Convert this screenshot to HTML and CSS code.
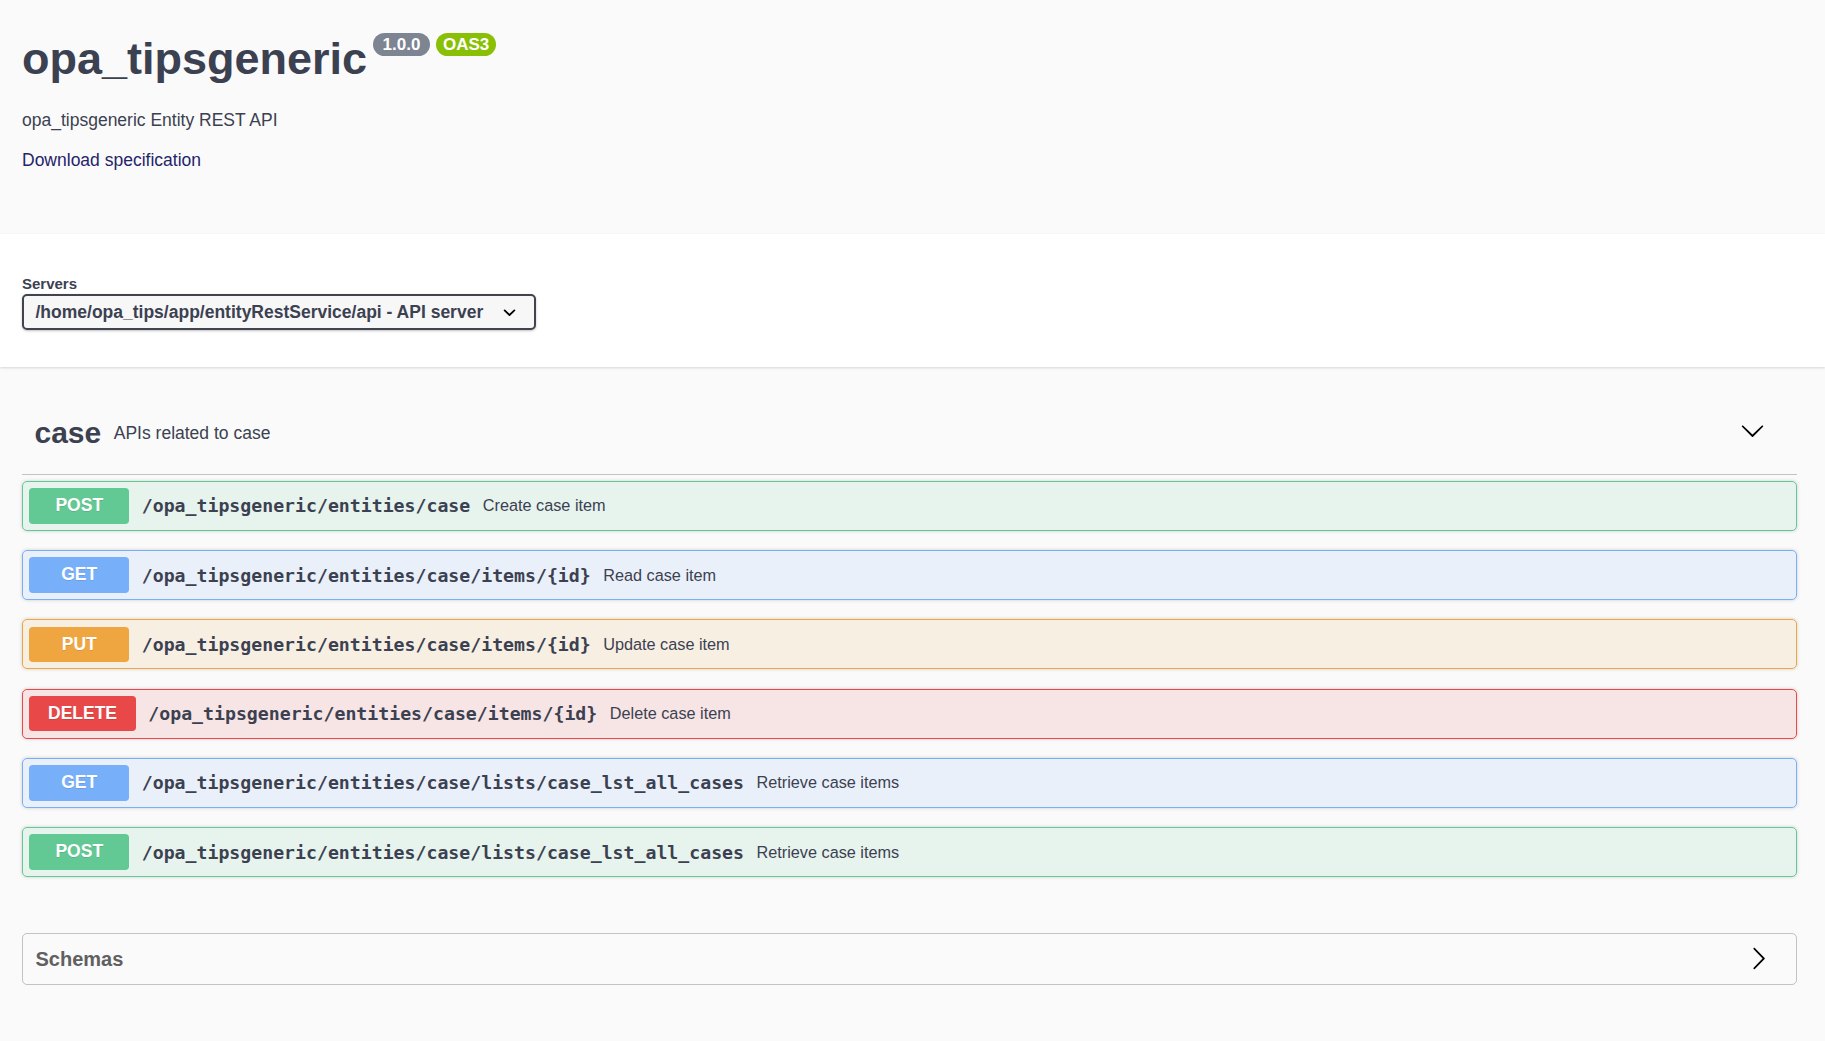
FILE: index.html
```html
<!DOCTYPE html>
<html lang="en">
<head>
  <meta charset="UTF-8" />
  <meta name="viewport" content="width=device-width, initial-scale=1.0"/>
  <title>opa_tipsgeneric</title>
  <link rel="stylesheet" href="styles.css">
</head>
<body>
  <div class="wrapper">
    <div class="info">
      <h2 class="title">opa_tipsgeneric<span class="stamp version">1.0.0</span><span class="stamp oas">OAS3</span></h2>
      <p class="description">opa_tipsgeneric Entity REST API</p>
      <p class="spec-link"><a href="#">Download specification</a></p>
    </div>
  </div>

  <div class="scheme-container">
    <div class="wrapper">
      <label class="servers-title">Servers</label>
      <div class="servers-select">
        <span>/home/opa_tips/app/entityRestService/api - API server</span>
        <svg viewBox="0 0 20 20" width="25" height="25"><path d="M13.418 7.859a.695.695 0 01.978 0 .68.68 0 010 .969l-3.908 3.83a.697.697 0 01-.979 0l-3.908-3.830a.68.68 0 010-.969.695.695 0 01.978 0L10 11l3.418-3.141z"/></svg>
      </div>
    </div>
  </div>

  <div class="wrapper">
    <section class="tag-section">
      <h3 class="tag">
        <span class="tag-name">case</span>
        <small>APIs related to case</small>
        <button class="expand">
          <svg viewBox="0 0 20 20" width="25" height="25"><path d="M17.418 6.109c.272-.268.709-.268.979 0s.271.701 0 .969l-7.908 7.83c-.27.268-.707.268-.979 0l-7.908-7.83c-.27-.268-.27-.701 0-.969.271-.268.709-.268.979 0L10 13.25l7.418-7.141z"/></svg>
        </button>
      </h3>

      <div class="opblock post">
        <span class="method">POST</span>
        <span class="path">/opa_tipsgeneric/entities/case</span>
        <span class="summary">Create case item</span>
      </div>
      <div class="opblock get">
        <span class="method">GET</span>
        <span class="path">/opa_tipsgeneric/entities/case/items/{id}</span>
        <span class="summary">Read case item</span>
      </div>
      <div class="opblock put">
        <span class="method">PUT</span>
        <span class="path">/opa_tipsgeneric/entities/case/items/{id}</span>
        <span class="summary">Update case item</span>
      </div>
      <div class="opblock delete">
        <span class="method">DELETE</span>
        <span class="path">/opa_tipsgeneric/entities/case/items/{id}</span>
        <span class="summary">Delete case item</span>
      </div>
      <div class="opblock get">
        <span class="method">GET</span>
        <span class="path">/opa_tipsgeneric/entities/case/lists/case_lst_all_cases</span>
        <span class="summary">Retrieve case items</span>
      </div>
      <div class="opblock post">
        <span class="method">POST</span>
        <span class="path">/opa_tipsgeneric/entities/case/lists/case_lst_all_cases</span>
        <span class="summary">Retrieve case items</span>
      </div>
    </section>

    <section class="models">
      <h4>Schemas</h4>
      <svg viewBox="0 0 20 20" width="25" height="25"><path d="M13.25 10L6.109 2.58c-.268-.27-.268-.707 0-.979.268-.27.701-.27.969 0l7.83 7.908c.268.271.268.709 0 .979l-7.830 7.908c-.268.271-.701.27-.969 0-.268-.269-.268-.707 0-.979L13.25 10z"/></svg>
    </section>
  </div>
</body>
</html>
```

FILE: styles.css
```css
* {
  box-sizing: border-box;
}

body {
  margin: 0;
  font-family: "Liberation Sans", Arial, sans-serif;
  background-color: #fafafa;
  color: #3b4151;
}

.wrapper {
  max-width: 1775px;
  margin: 0 28px 0 22px;
}

/* header info */
.info {
  padding: 33px 0 64px;
}

.title {
  display: flex;
  align-items: flex-start;
  margin: 0;
  font-size: 45px;
  line-height: 52px;
  font-weight: bold;
}

.stamp {
  margin-top: -0.5px;
  height: 23px;
  line-height: 23px;
  border-radius: 70px;
  color: white;
  font-size: 17px;
  font-weight: bold;
}

.version {
  background-color: #7d8492;
  padding: 0 10px;
  margin-left: 5.5px;
}

.oas {
  background-color: #89bf04;
  padding: 0 7px;
  margin-left: 5.5px;
}

.description {
  margin: 25px 0 0;
  font-size: 17.5px;
  line-height: 20px;
}

.spec-link {
  margin: 20px 0 0;
  font-size: 17.5px;
  line-height: 20px;
}

.spec-link a {
  color: #25246b;
  text-decoration: none;
}

/* servers */
.scheme-container {
  background-color: white;
  padding: 41px 0 37px;
  box-shadow: 0 1px 2.5px 0 rgba(0, 0, 0, 0.15);
}

.servers-title {
  display: block;
  font-size: 15px;
  line-height: 17px;
  font-weight: bold;
  margin-bottom: 2px;
}

.servers-select {
  display: flex;
  align-items: center;
  justify-content: space-between;
  width: 514px;
  height: 36px;
  padding: 0 12px 0 11.5px;
  background-color: #f7f7f7;
  border: 2px solid #41444e;
  border-radius: 5px;
  box-shadow: 0 1px 2.5px 0 rgba(0, 0, 0, 0.25);
  font-size: 17.5px;
  font-weight: bold;
}

/* tag section */
.tag {
  display: flex;
  align-items: center;
  margin: 25.5px 0 6.25px;
  padding: 23px 25px 24px 12.5px;
  border-bottom: 1px solid rgba(59, 65, 81, 0.3);
  font-size: 30px;
  line-height: 34px;
}

.tag small {
  flex: 1;
  padding: 0 12.5px;
  font-size: 17.5px;
  font-weight: normal;
}

.expand {
  display: flex;
  padding: 0 7.5px;
  margin-bottom: 4px;
  border: none;
  background: none;
}

.opblock {
  display: flex;
  align-items: center;
  height: 50px;
  padding: 6.25px;
  margin-bottom: 19.25px;
  border: 1px solid;
  border-radius: 5px;
  box-shadow: 0 0 3.75px rgba(0, 0, 0, 0.19);
}

.method {
  min-width: 100px;
  height: 35.5px;
  line-height: 35.5px;
  padding: 0 18.75px;
  border-radius: 3.75px;
  color: white;
  text-align: center;
  font-size: 17.5px;
  font-weight: bold;
  text-shadow: 0 1px 0 rgba(0, 0, 0, 0.1);
}

.path {
  padding: 0 12.5px;
  font-family: "DejaVu Sans Mono", "Liberation Mono", monospace;
  font-size: 18.2px;
  font-weight: bold;
}

.summary {
  font-size: 16.25px;
}

.post { background-color: rgba(98, 201, 148, 0.12); border-color: #62c994; }
.post .method { background-color: #62c994; }

.get { background-color: rgba(120, 175, 249, 0.12); border-color: #78aff9; }
.get .method { background-color: #78aff9; }

.put { background-color: rgba(239, 165, 64, 0.12); border-color: #efa540; }
.put .method { background-color: #efa540; }

.delete { background-color: rgba(232, 72, 72, 0.12); border-color: #e84848; }
.delete .method { background-color: #e84848; }

/* schemas */
.models {
  display: flex;
  align-items: center;
  justify-content: space-between;
  margin: 56px 0 30px;
  padding: 0 25px 0 12.5px;
  border: 1px solid rgba(59, 65, 81, 0.3);
  border-radius: 5px;
}

.models h4 {
  margin: 0;
  padding: 12.75px 0;
  font-size: 20px;
  line-height: 24px;
  color: #606060;
}
```
